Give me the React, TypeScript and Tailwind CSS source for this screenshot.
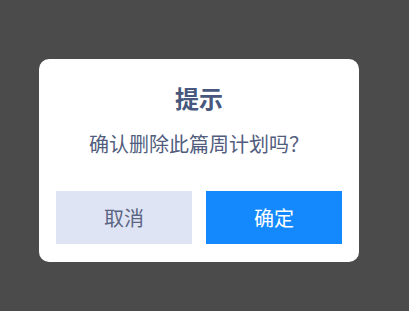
export default function App() {
  return (
    <div
      className="w-[409px] h-[311px] bg-[#4b4b4b] pl-[39px] pt-[59px] overflow-hidden"
      style={{ fontFamily: '"Noto Sans CJK SC", "Noto Sans", sans-serif' }}
    >
      <div className="w-[320px] h-[203px] bg-white rounded-[10px] pt-[23px] px-[17px] pb-[18px] flex flex-col">
        <h2 className="h-[32px] leading-[32px] text-center text-[24px] font-bold text-[#47577e]">提示</h2>
        <p className="mt-[17px] h-[26px] leading-[26px] text-center text-[20px] text-[#525d7e]">
          确认删除此篇周计划吗？
        </p>
        <div className="mt-[34px] flex gap-[14px]">
          <button className="w-[136px] h-[53px] bg-[#dfe4f4] text-[#5b6583] text-[20px]">取消</button>
          <button className="w-[136px] h-[53px] bg-[#1489fd] text-white text-[20px]">确定</button>
        </div>
      </div>
    </div>
  );
}
